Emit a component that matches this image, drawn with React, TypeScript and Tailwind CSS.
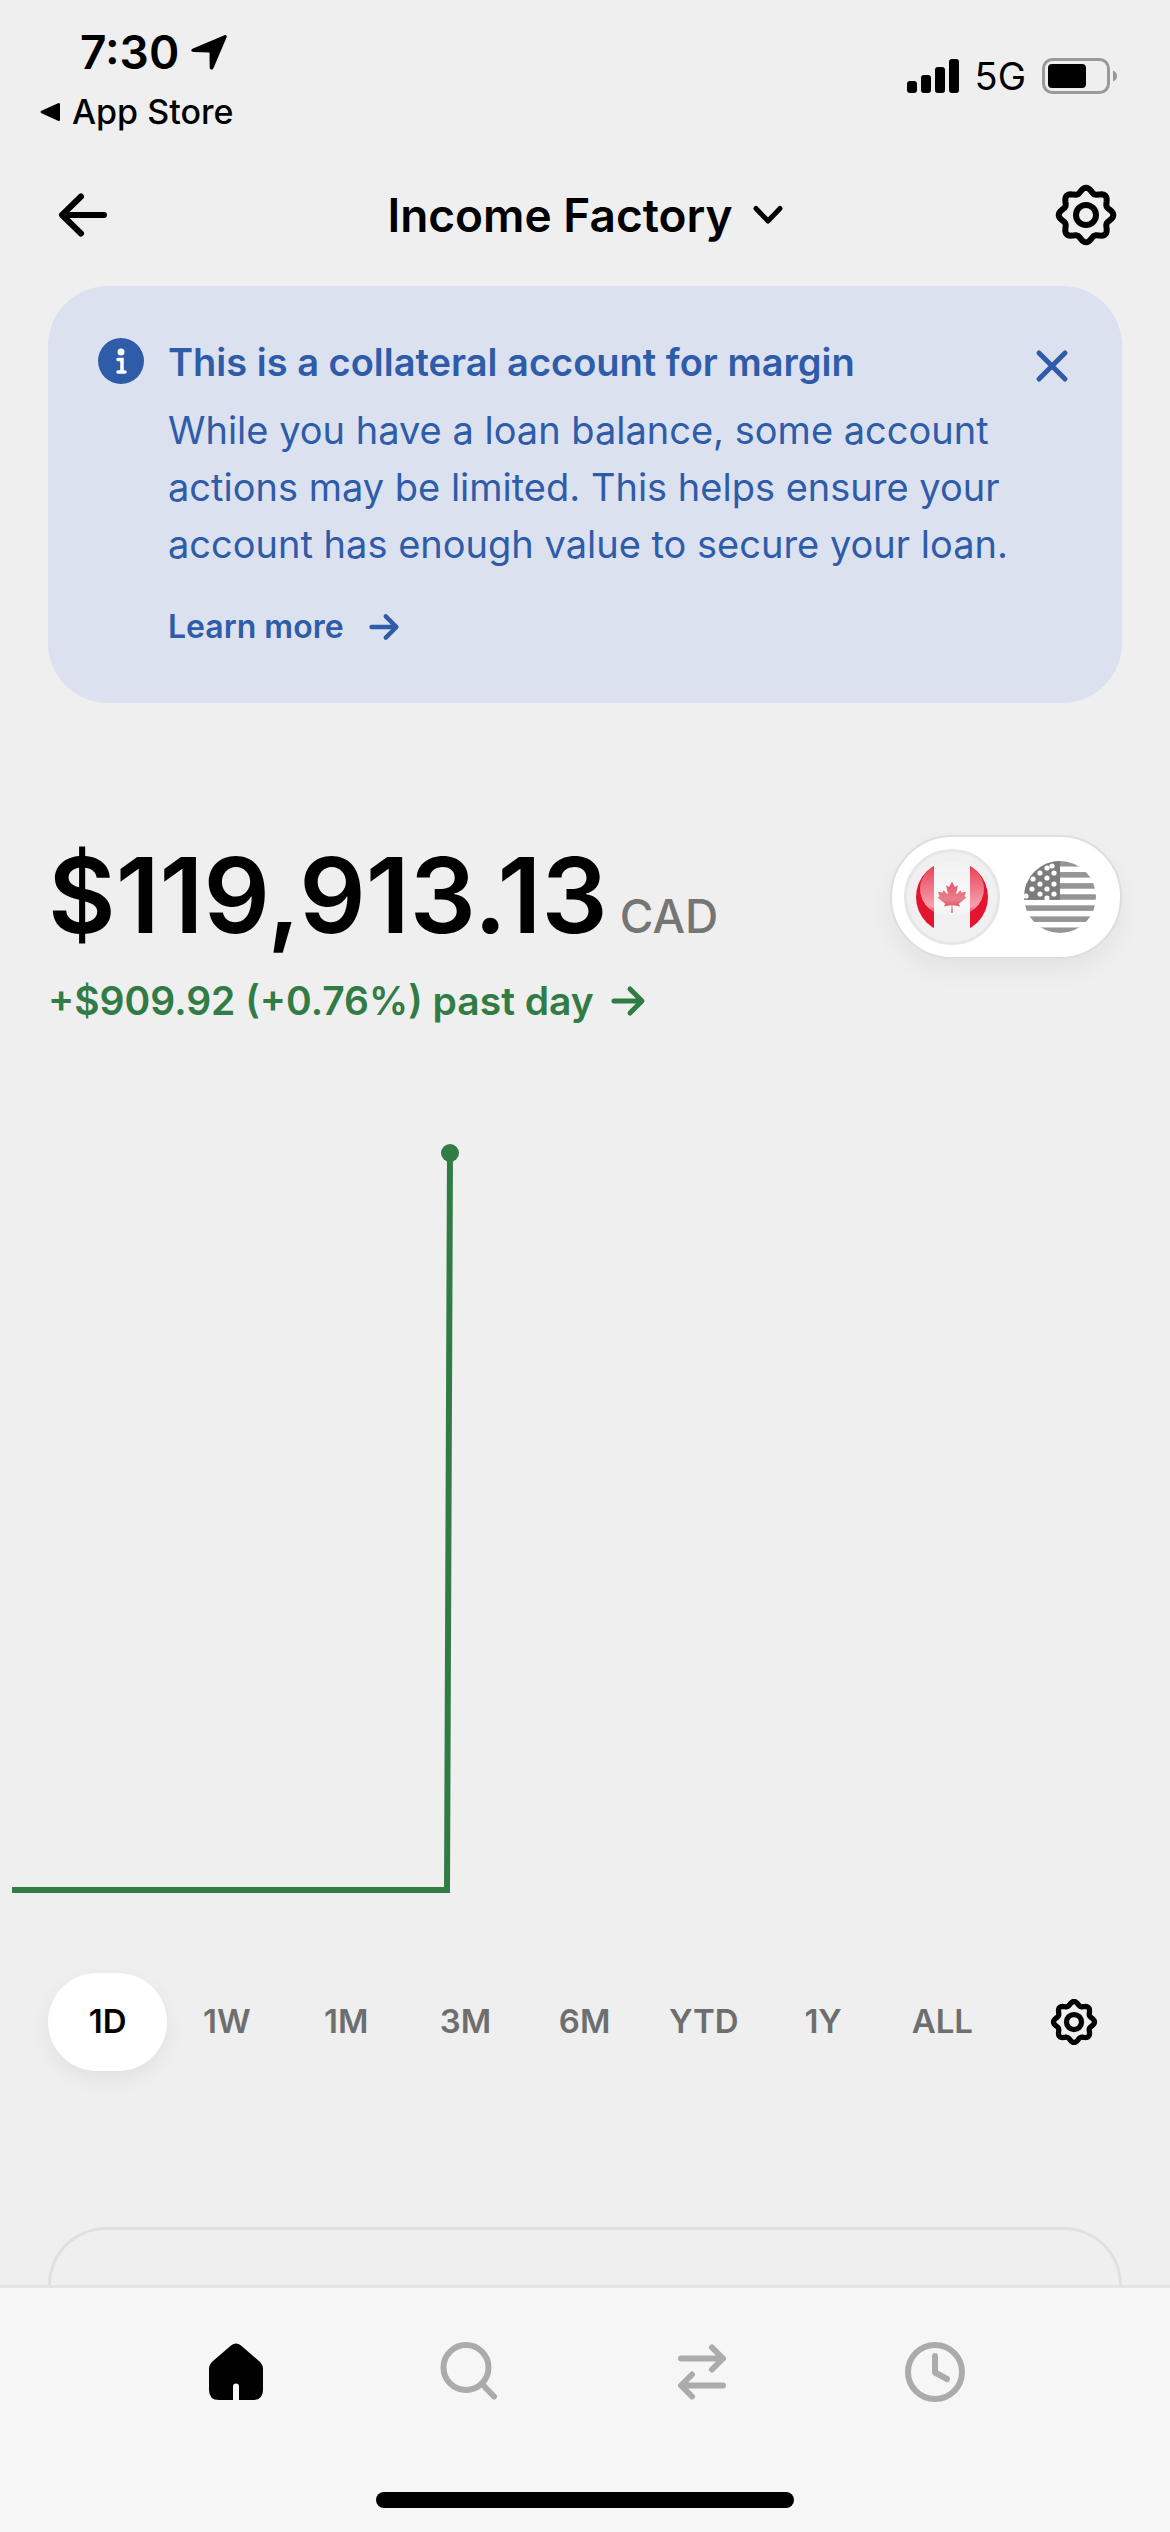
import React, { useState } from "react";

type IconProps = { className?: string };

const BLUE = "text-[#2f5ca8]";

// eight soft teeth around a circle, sampled into a closed path
const gearPath = (() => {
  const points: string[] = [];
  for (let i = 0; i < 128; i++) {
    const a = (i / 128) * Math.PI * 2;
    const r = 24.8 + 2.5 * Math.cos(8 * a);
    points.push(`${(32 + r * Math.sin(a)).toFixed(2)} ${(32 - r * Math.cos(a)).toFixed(2)}`);
  }
  return `M${points.join("L")}Z`;
})();

const GearIcon = ({ className, weight = 6 }: IconProps & { weight?: number }) => (
  <svg viewBox="0 0 64 64" className={className} fill="none" stroke="currentColor" strokeWidth={weight} strokeLinejoin="round">
    <path d={gearPath} />
    <circle cx="32" cy="32" r="10" />
  </svg>
);

const ArrowIcon = ({ className }: IconProps) => (
  <svg viewBox="0 0 36 32" className={className} fill="none" stroke="currentColor" strokeWidth="5" strokeLinecap="round" strokeLinejoin="round">
    <path d="M4 16H31M20 4L32 16L20 28" />
  </svg>
);

const CanadaFlag = ({ className }: IconProps) => (
  <svg viewBox="-36 -36 72 72" className={className}>
    <defs>
      <clipPath id="ca-clip">
        <circle r="36" />
      </clipPath>
      <linearGradient id="ca-shine" x1="0" y1="0" x2="0" y2="1">
        <stop offset="0" stopColor="#fff" stopOpacity="0.15" />
        <stop offset="0.8" stopColor="#fff" stopOpacity="0.6" />
        <stop offset="1" stopColor="#fff" stopOpacity="0" />
      </linearGradient>
      <linearGradient id="ca-leaf" x1="0" y1="0" x2="0" y2="1">
        <stop offset="0" stopColor="#e0566a" />
        <stop offset="0.55" stopColor="#ea7f88" />
        <stop offset="1" stopColor="#de4055" />
      </linearGradient>
    </defs>
    <g clipPath="url(#ca-clip)">
      <path d="M-36-36h18v72h-18zM18-36h18v72h-18z" fill="#e3142e" />
      <ellipse cy="-8" rx="32" ry="28" fill="url(#ca-shine)" />
    </g>
    <path
      transform="scale(0.0078)"
      fill="url(#ca-leaf)"
      d="m-90 2030 45-863a95 95 0 0 0-111-98l-859 151 116-320a65 65 0 0 0-20-73l-941-762 212-99a65 65 0 0 0 34-79l-186-572 542 115a65 65 0 0 0 73-38l105-247 423 454a65 65 0 0 0 111-57l-204-1052 327 189a65 65 0 0 0 91-27l332-652 332 652a65 65 0 0 0 91 27l327-189-204 1052a65 65 0 0 0 111 57l423-454 105 247a65 65 0 0 0 73 38l542-115-186 572a65 65 0 0 0 34 79l212 99-941 762a65 65 0 0 0-20 73l116 320-859-151a95 95 0 0 0-111 98l45 863z"
    />
  </svg>
);

const stars = [
  [-8, -31], [-13, -29], [-20, -24], [-6, -24], [-13, -19], [-27, -18], [-20, -13], [-6, -13],
  [-13, -8], [-28, -8], [-20, -3], [-6, -3], [-34, -1], [-13, 1],
];

const UsFlag = ({ className }: IconProps) => (
  <svg viewBox="-36 -36 72 72" className={className}>
    <defs>
      <clipPath id="us-clip">
        <circle r="36" />
      </clipPath>
    </defs>
    <g clipPath="url(#us-clip)">
      {[0, 1, 2, 3, 4, 5, 6].map((i) => (
        <rect key={i} x="-36" y={-36 + i * 11.08} width="72" height="5.54" fill="#959595" />
      ))}
      <rect x="-36" y="-36" width="36" height="38.8" fill="#7c7c7c" />
      {stars.map(([x, y]) => (
        <circle key={`${x},${y}`} cx={x} cy={y} r="2.6" fill="#fff" />
      ))}
    </g>
  </svg>
);

const StatusBar = () => (
  <div className="flex justify-between pl-10 pr-[52px] pt-6">
    <div>
      <div className="flex items-center gap-3 pl-10">
        <span className="text-[46px] leading-[56px] font-semibold">7:30</span>
        <svg viewBox="0 0 36 36" className="size-9">
          <path d="M33.500 1.200C35 .5 36.200 1.800 35.500 3.500L22.500 34C21.600 36.400 18.800 36 18.700 33.500L18.500 18.500L3 18C-.2 17.900-.8 15.600 2 14.400Z" fill="#000" />
        </svg>
      </div>
      <a href="#app-store" className="mt-2 flex items-center gap-3 text-[34px] leading-[48px] font-medium">
        <svg viewBox="0 0 20 20" className="size-5">
          <path d="M18 1.200Q20 .2 20 2.500V17.500Q20 19.800 18 18.800L1.500 11.200Q-.5 10 1.500 8.800Z" fill="#000" />
        </svg>
        App Store
      </a>
    </div>
    <div className="mt-6 flex h-14 items-center gap-4">
      <svg viewBox="0 0 52 34" className="h-[34px] w-[52px]">
        <rect x="0" y="22" width="10" height="12" rx="3" />
        <rect x="14" y="16" width="10" height="18" rx="3" />
        <rect x="28" y="8" width="10" height="26" rx="3" />
        <rect x="42" y="0" width="10" height="34" rx="3" />
      </svg>
      <span className="text-[38px] leading-[48px]">5G</span>
      <svg viewBox="0 0 76 36" className="h-9 w-[76px]">
        <rect x="1.500" y="1.500" width="65" height="33" rx="9" fill="none" stroke="#999" strokeWidth="3" />
        <rect x="6" y="6" width="38" height="24" rx="4" />
        <path d="M71 12.500Q75 14 75 18T71 23.500Z" fill="#999" />
      </svg>
    </div>
  </div>
);

const Header = () => (
  <header className="mt-2 flex h-[142px] items-center justify-between px-[52px]">
    <button aria-label="Back" className="w-16">
      <svg viewBox="0 0 64 64" className="size-16" fill="none" stroke="currentColor" strokeWidth="6" strokeLinecap="round" strokeLinejoin="round">
        <path d="M52 32H11M29 13.500L10 32L29 50.500" />
      </svg>
    </button>
    <button className="flex items-center gap-5 text-[46px] leading-[60px] font-semibold">
      Income Factory
      <svg viewBox="0 0 30 20" className="h-5 w-[30px]" fill="none" stroke="currentColor" strokeWidth="5" strokeLinecap="round" strokeLinejoin="round">
        <path d="M3 3.500L15 16L27 3.500" />
      </svg>
    </button>
    <button aria-label="Account settings">
      <GearIcon className="size-16" />
    </button>
  </header>
);

const MarginNotice = () => (
  <section className={`mx-12 flex rounded-[60px] bg-[#dce1f0] px-[50px] py-12 ${BLUE}`}>
    <svg viewBox="0 0 46 46" className="mt-1 size-[46px] shrink-0">
      <circle cx="23" cy="23" r="23" fill="currentColor" />
      <circle cx="23" cy="14" r="3.500" fill="#fff" />
      <path d="M20 21.500H24V33M20 34H27" fill="none" stroke="#fff" strokeWidth="3.500" strokeLinecap="round" />
    </svg>
    <div className="ml-6 flex-1">
      <h2 className="text-[38px] leading-14 font-semibold">This is a collateral account for margin</h2>
      <p className="mt-3 text-[38px] leading-[57px]">
        While you have a loan balance, some account
        <br />
        actions may be limited. This helps ensure your
        <br />
        account has enough value to secure your loan.
      </p>
      <a href="#learn" className="mt-[26px] flex items-center gap-6 text-[32px] leading-14 font-semibold">
        Learn more
        <ArrowIcon className="h-8 w-8" />
      </a>
    </div>
    <button aria-label="Dismiss" className="mt-3 h-10">
      <svg viewBox="0 0 40 40" className="size-10" fill="none" stroke="currentColor" strokeWidth="5" strokeLinecap="round">
        <path d="M7 7L33 33M33 7L7 33" />
      </svg>
    </button>
  </section>
);

const Balance = () => (
  <section className="mx-12 mt-[132px] flex items-start justify-between">
    <div>
      <div className="flex items-baseline gap-3">
        <span className="text-[104px] leading-[120px] font-semibold">$119,913.13</span>
        <span className="text-[46px] leading-[56px] font-medium text-[#757575]">CAD</span>
      </div>
      <a href="#performance" className="mt-[18px] flex items-center gap-4 text-[39px] leading-14 font-semibold text-[#317c45]">
        +$909.92 (+0.76%) past day
        <ArrowIcon className="h-8 w-9" />
      </a>
    </div>
    <div className="flex items-center gap-3 rounded-full border-2 border-[#dedede] bg-white px-3 py-3 shadow-[0_12px_24px_rgba(0,0,0,0.05)]">
      <button aria-label="Show in CAD" className="flex size-24 items-center justify-center rounded-full border-3 border-[#e6e6e6] bg-[#f0f0f0]">
        <CanadaFlag className="size-[72px]" />
      </button>
      <button aria-label="Show in USD" className="flex size-24 items-center justify-center rounded-full">
        <UsFlag className="size-[72px]" />
      </button>
    </div>
  </section>
);

const Chart = () => (
  <svg viewBox="0 0 1170 780" className="mt-[100px] block w-full" fill="none">
    <path d="M12 761H447L450 24" stroke="#317c45" strokeWidth="6" />
    <circle cx="450" cy="24" r="9" fill="#317c45" />
  </svg>
);

const ranges = ["1D", "1W", "1M", "3M", "6M", "YTD", "1Y", "ALL"];

const RangePicker = () => {
  const [active, setActive] = useState("1D");

  return (
    <div className="mt-16 flex items-center pl-12 pr-[72px]">
      <div className="grid flex-1 grid-cols-8">
        {ranges.map((range) => (
          <button
            key={range}
            onClick={() => setActive(range)}
            className={
              range === active
                ? "h-[98px] rounded-full bg-white text-[33px] font-semibold text-black shadow-[0_8px_20px_rgba(0,0,0,0.06)]"
                : "h-[98px] rounded-full text-[33px] font-semibold text-[#6e6e6e]"
            }
          >
            {range}
          </button>
        ))}
      </div>
      <button aria-label="Chart settings" className="ml-12">
        <GearIcon className="size-12" weight={7} />
      </button>
    </div>
  );
};

const TabBar = () => (
  <nav className="border-t-3 border-[#e4e4e4] bg-[#f6f6f6] px-[119px] pt-12 pb-6">
    <div className="grid grid-cols-4 justify-items-center text-[#ababab]">
      <a href="#home" aria-label="Home" className="text-black">
        <svg viewBox="0 0 72 72" className="size-[72px]">
          <path d="M31 9.500Q36 5.500 41 9.500L59 25Q63 28.500 63 33V54Q63 64 53 64H39V50.500A3 3 0 0 0 33 50.500V64H19Q9 64 9 54V33Q9 28.500 13 25Z" fill="currentColor" />
        </svg>
      </a>
      <a href="#search" aria-label="Search">
        <svg viewBox="0 0 72 72" className="size-[72px]" fill="none" stroke="currentColor" strokeWidth="6" strokeLinecap="round">
          <circle cx="33" cy="31.500" r="22.500" />
          <path d="M50 49L61 60.500" />
        </svg>
      </a>
      <a href="#transfer" aria-label="Transfer">
        <svg viewBox="0 0 72 72" className="size-[72px]" fill="none" stroke="currentColor" strokeWidth="6" strokeLinecap="round" strokeLinejoin="round">
          <path d="M15 22.500H56M46 11.500L57 22.500L46 33.500M57 49.500H16M26 38.500L15 49.500L26 60.500" />
        </svg>
      </a>
      <a href="#activity" aria-label="Activity">
        <svg viewBox="0 0 72 72" className="size-[72px]" fill="none" stroke="currentColor" strokeWidth="6" strokeLinecap="round" strokeLinejoin="round">
          <circle cx="36" cy="36" r="27" />
          <path d="M36 20V36.500L48 43" />
        </svg>
      </a>
    </div>
    <div className="mx-auto mt-[84px] h-4 w-[418px] rounded-full bg-black" />
  </nav>
);

const App = () => {
  return (
    <div className="flex min-h-screen flex-col bg-[#efefef] font-['Inter',sans-serif] text-black">
      <StatusBar />
      <Header />
      <main className="flex flex-1 flex-col">
        <MarginNotice />
        <Balance />
        <Chart />
        <RangePicker />
        <div className="mx-12 mt-[156px] min-h-14 flex-1 rounded-t-[60px] border-3 border-b-0 border-[#e0e0e0]" />
      </main>
      <TabBar />
    </div>
  );
};

export default App;
